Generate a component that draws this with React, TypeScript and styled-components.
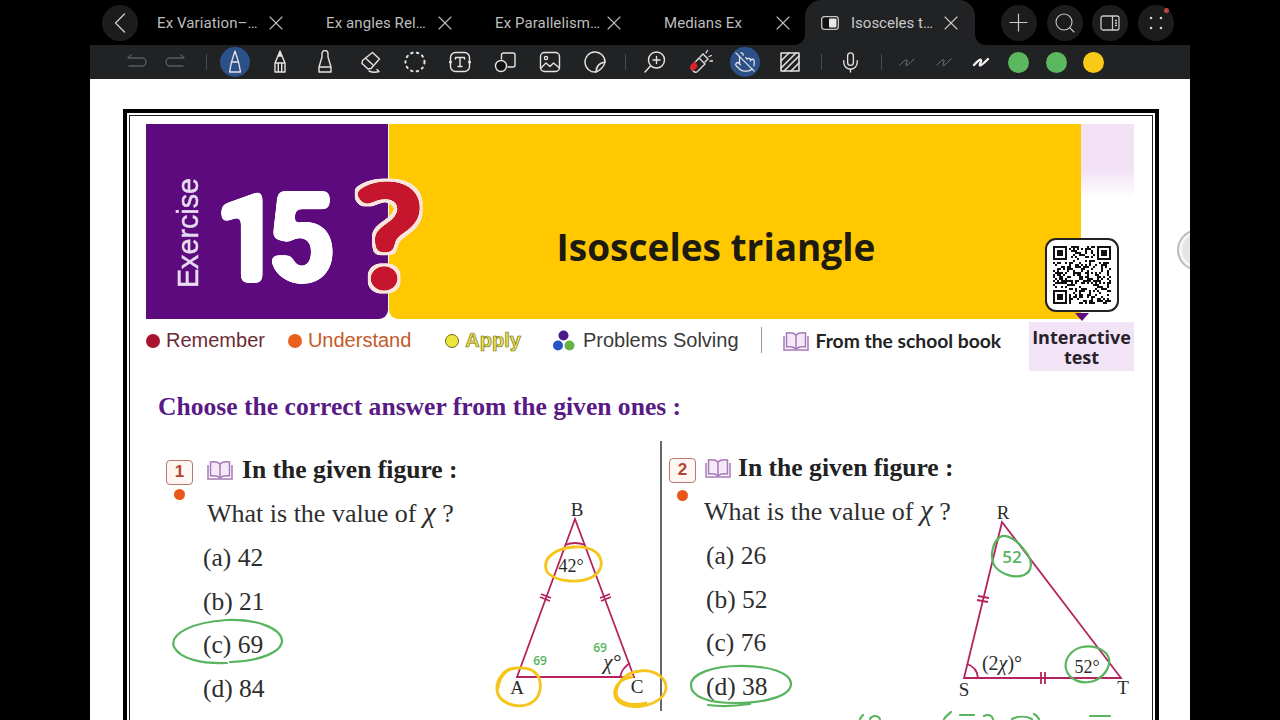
import React from 'react';
import styled, { createGlobalStyle } from 'styled-components';
import { ChevronLeft, X, Plus, Search, Mic, PointerOff } from 'lucide-react';

const GlobalStyle = createGlobalStyle`
    html, body {
        margin: 0;
        padding: 0;
        background: #000;
        overflow: hidden;
    }
`;

const SERIF = '"Liberation Serif", "Times New Roman", serif';
const SANS = '"Liberation Sans", Arial, sans-serif';
const HUMANIST = '"Open Sans", "Noto Sans", sans-serif';

const Screen = styled.div`
    width: 1280px;
    height: 720px;
    overflow: hidden;
    background: #000;
    display: flex;
    justify-content: center;
`;

const Shell = styled.div`
    width: 1100px;
    height: 720px;
    display: flex;
    flex-direction: column;
`;

/* top tab strip */
const TabBar = styled.div`
    height: 45px;
    flex: none;
    display: flex;
    align-items: center;
    padding-left: 12px;
    padding-right: 16px;
    font-family: Roboto, "Noto Sans", sans-serif;
`;

const RoundButton = styled.button`
    width: 36px;
    height: 36px;
    flex: none;
    border: none;
    padding: 0;
    border-radius: 50%;
    background: #1c1c1d;
    color: #c9c9c9;
    display: flex;
    align-items: center;
    justify-content: center;
    position: relative;
`;

const TabStrip = styled.div`
    display: flex;
    align-items: center;
    margin-left: 8px;
    height: 45px;
`;

const Tab = styled.div`
    width: 142px;
    margin-right: 27px;
    padding-left: 11px;
    box-sizing: border-box;
    display: flex;
    align-items: center;
    justify-content: space-between;
    color: #bdbdbd;
    font-size: 15px;
    letter-spacing: 0.1px;
    white-space: nowrap;
`;

const ActiveTab = styled.div`
    width: 170px;
    height: 45px;
    margin-left: -17px;
    box-sizing: border-box;
    padding: 0 12px 0 16px;
    display: flex;
    align-items: center;
    background: #212224;
    border-radius: 16px 16px 0 0;
    color: #c9c9c9;
    font-size: 15px;
    white-space: nowrap;
    position: relative;
    span {
        margin-left: 12px;
        flex: 1;
    }
    &::before,
    &::after {
        content: '';
        position: absolute;
        bottom: 0;
        width: 10px;
        height: 10px;
    }
    &::before {
        left: -10px;
        background: radial-gradient(circle at 0 0, #000 9.5px, #212224 10px);
    }
    &::after {
        right: -10px;
        background: radial-gradient(circle at 100% 0, #000 9.5px, #212224 10px);
    }
`;

const RightControls = styled.div`
    margin-left: auto;
    display: flex;
    gap: 9.7px;
`;

const Badge = styled.i`
    position: absolute;
    top: 3px;
    right: 5px;
    width: 5px;
    height: 5px;
    border-radius: 50%;
    background: #c0453f;
`;

/* tool strip */
const Toolbar = styled.div`
    height: 34px;
    flex: none;
    background: #212224;
    display: flex;
    align-items: center;
    padding-left: 32px;
`;

const ToolGroup = styled.div<{ $gap: number; $ml: number }>`
    display: flex;
    align-items: center;
    gap: ${(p) => p.$gap}px;
    margin-left: ${(p) => p.$ml}px;
`;

const Tool = styled.div<{ $size?: number; $active?: boolean }>`
    width: ${(p) => p.$size ?? 34}px;
    height: 30px;
    flex: none;
    display: flex;
    align-items: center;
    justify-content: center;
    border-radius: 15px;
    color: #e4e4e4;
    ${(p) => p.$active && 'background: #2c5088; width: 30px; margin: 0 2px;'}
`;

const ToolSeparator = styled.div<{ $ml: number }>`
    width: 1px;
    height: 16px;
    background: #4a4b4d;
    flex: none;
    margin-left: ${(p) => p.$ml}px;
`;

const ColorDot = styled.div<{ $color: string }>`
    width: 21px;
    height: 21px;
    flex: none;
    border-radius: 50%;
    background: ${(p) => p.$color};
`;

/* page */
const Sheet = styled.div`
    flex: 1;
    min-height: 0;
    background: #fff;
    padding: 30px 31px 0 33px;
    position: relative;
    overflow: hidden;
`;

const SideHandle = styled.div`
    position: absolute;
    left: 1087px;
    top: 150px;
    width: 42px;
    height: 42px;
    border-radius: 50%;
    background: #e4e4e4;
    border: 2px solid #bdbdbd;
    box-shadow: inset 0 0 0 3px #f6f6f6;
    box-sizing: border-box;
`;

const Frame = styled.div`
    border: 4px solid #000;
    padding: 2px;
    height: 700px;
    box-sizing: border-box;
`;

const FrameInner = styled.div`
    border: 1.5px solid #222;
    height: 100%;
    box-sizing: border-box;
    padding: 7.5px 18px 0 16px;
`;

const Banner = styled.div`
    height: 195px;
    display: flex;
    position: relative;
`;

const PurplePanel = styled.div`
    width: 242px;
    flex: none;
    background: #5e0a7f;
    border-radius: 0 0 9px 0;
    display: flex;
    align-items: center;
    box-sizing: border-box;
    padding-left: 29px;
`;

const ExerciseLabel = styled.div`
    writing-mode: vertical-rl;
    transform: rotate(180deg);
    font-family: ${SANS};
    font-size: 28.7px;
    line-height: 26px;
    color: #e6dcef;
    -webkit-text-stroke: 0.5px #e6dcef;
    margin-top: 24px;
`;

const BigNumber = styled.svg`
    flex: none;
    overflow: visible;
    margin-left: 17px;
    margin-top: 29px;
`;

const YellowPanel = styled.div`
    width: 692px;
    flex: none;
    margin-left: 1px;
    background: #ffc800;
    border-radius: 0 0 0 9px;
    display: flex;
    align-items: center;
    justify-content: center;
    padding-right: 38px;
    box-sizing: border-box;
`;

const QuestionMark = styled.svg`
    position: absolute;
    left: 200px;
    top: 45px;
    overflow: visible;
`;

const BannerTitle = styled.h1`
    margin: 52px 0 0;
    font-family: ${HUMANIST};
    font-weight: 700;
    font-size: 37px;
    line-height: 50px;
    color: #1d1a10;
    white-space: nowrap;
`;

const PinkStrip = styled.div`
    width: 53px;
    flex: none;
    background: linear-gradient(180deg, #f3e2f6 0, #f3e2f6 24%, #fff 38%);
`;

const QrCard = styled.div`
    position: absolute;
    left: 899px;
    top: 114px;
    width: 74px;
    height: 74px;
    box-sizing: border-box;
    background: #fff;
    border: 2px solid #222;
    border-radius: 11px;
    padding: 6px;
    &::after {
        content: '';
        position: absolute;
        left: 28px;
        bottom: -11px;
        border-left: 7px solid transparent;
        border-right: 7px solid transparent;
        border-top: 8px solid #5e0a7f;
    }
`;

const Legend = styled.div`
    display: flex;
    align-items: flex-start;
    height: 49px;
    margin-top: 3px;
`;

const LegendItem = styled.div<{ $ml?: number; $color: string; $bold?: boolean }>`
    display: flex;
    align-items: center;
    height: 38px;
    margin-left: ${(p) => p.$ml ?? 0}px;
    font-family: ${(p) => (p.$bold ? 'Lato, ' + HUMANIST : SANS)};
    font-weight: ${(p) => (p.$bold ? 700 : 400)};
    font-size: ${(p) => (p.$bold ? 19.3 : 20)}px;
    color: ${(p) => p.$color};
    white-space: nowrap;
`;

const LegendDot = styled.i<{ $color: string; $ring?: string }>`
    width: 14px;
    height: 14px;
    box-sizing: border-box;
    border-radius: 50%;
    background: ${(p) => p.$color};
    margin-right: 6px;
    flex: none;
    ${(p) => p.$ring && `border: 1.5px solid ${p.$ring};`}
`;

const ApplyText = styled.span`
    font-weight: 700;
    color: #e9e34e;
    -webkit-text-stroke: 0.7px #77701e;
`;

const LegendRule = styled.div`
    width: 1px;
    height: 26px;
    background: #999;
    margin: 5px 0 0 22px;
    flex: none;
`;

const InteractiveBox = styled.div`
    margin-left: auto;
    width: 105px;
    height: 49px;
    background: #f3e3f6;
    font-family: ${HUMANIST};
    font-weight: 700;
    font-size: 18px;
    line-height: 20px;
    color: #26222a;
    text-align: center;
    padding-top: 5px;
    box-sizing: border-box;
`;

const Instruction = styled.h2`
    margin: 21px 0 0 12px;
    font-family: ${SERIF};
    font-weight: 700;
    font-size: 25.6px;
    line-height: 30px;
    color: #591a86;
    white-space: nowrap;
`;

const Questions = styled.div`
    display: grid;
    grid-template-columns: 516px minmax(0, 1fr);
    height: 270px;
    margin-top: 19px;
`;

const Question = styled.div<{ $divided?: boolean; $pl: number; $pt: number }>`
    display: flex;
    min-width: 0;
    box-sizing: border-box;
    height: 270px;
    padding: ${(p) => p.$pt}px 0 0 ${(p) => p.$pl}px;
    ${(p) => p.$divided && 'border-right: 2px solid #666;'}
`;

const NumberColumn = styled.div`
    width: 27px;
    flex: none;
    margin-top: 5px;
    display: flex;
    flex-direction: column;
    align-items: center;
`;

const NumberBox = styled.div`
    width: 27px;
    height: 25px;
    box-sizing: border-box;
    border: 1.5px solid #b9796f;
    border-radius: 4px;
    background: #fdf6f3;
    font-family: ${SANS};
    font-weight: 700;
    font-size: 17px;
    line-height: 22px;
    text-align: center;
    color: #b5432f;
`;

const OrangeDot = styled.i<{ $mt: number }>`
    width: 11px;
    height: 11px;
    border-radius: 50%;
    background: #e8561a;
    margin-top: ${(p) => p.$mt}px;
`;

const QuestionBody = styled.div<{ $ml: number }>`
    flex: 1;
    min-width: 0;
    margin-left: ${(p) => p.$ml}px;
`;

const QuestionTitle = styled.div<{ $gap: number }>`
    display: flex;
    align-items: center;
    height: 30px;
    margin-bottom: 6px;
    font-family: ${SERIF};
    font-weight: 700;
    font-size: 25.6px;
    color: #222;
    white-space: nowrap;
    svg {
        margin-right: ${(p) => p.$gap}px;
    }
`;

const Line = styled.div<{ $ml?: number }>`
    position: relative;
    height: 43.6px;
    line-height: 43.6px;
    margin-left: ${(p) => p.$ml ?? 0}px;
    font-family: ${SERIF};
    font-size: 25.5px;
    color: #2e2e2e;
    white-space: nowrap;
`;

const PromptLine = styled(Line)`
    font-size: 26px;
    margin-bottom: 2px;
    i {
        font-size: 29px;
    }
`;

const Scribble = styled.svg<{ $left: number; $top: number }>`
    position: absolute;
    left: ${(p) => p.$left}px;
    top: ${(p) => p.$top}px;
    overflow: visible;
`;

const Figure = styled.svg<{ $mt: number; $mr: number }>`
    flex: none;
    overflow: visible;
    margin-top: ${(p) => p.$mt}px;
    margin-right: ${(p) => p.$mr}px;
`;

const QR_SIZE = 29;

const QrCode: React.FC = () => {
    const cells: React.ReactNode[] = [];
    let seed = 29;
    for (let y = 0; y < QR_SIZE; y++) {
        for (let x = 0; x < QR_SIZE; x++) {
            seed = (seed * 137 + 59) % 1009;
            const quiet =
                (x < 8 && y < 8) || (x >= QR_SIZE - 8 && y < 8) || (x < 8 && y >= QR_SIZE - 8);
            if (!quiet && seed % 5 < 2) {
                cells.push(<rect key={`${x}-${y}`} x={x} y={y} width={1} height={1} />);
            }
        }
    }
    const finder = (ox: number, oy: number) => (
        <g key={`${ox}-${oy}`}>
            <rect x={ox + 0.5} y={oy + 0.5} width={6} height={6} fill="none" stroke="#111" />
            <rect x={ox + 2} y={oy + 2} width={3} height={3} />
        </g>
    );
    return (
        <svg width="58" height="58" viewBox={`0 0 ${QR_SIZE} ${QR_SIZE}`} fill="#111" shapeRendering="crispEdges">
            {finder(0, 0)}
            {finder(QR_SIZE - 7, 0)}
            {finder(0, QR_SIZE - 7)}
            {cells}
        </svg>
    );
};

const BookIcon: React.FC<{ w?: number }> = ({ w = 26 }) => (
    <svg width={w} height={(w * 20) / 26} viewBox="0 0 26 20" fill="none" stroke="#a678b8" strokeWidth="1.5" style={{ flex: 'none' }}>
        <path d="M13 4C11 2 7 1.5 3.5 2v14c3.500-.5 7.500 0 9.500 2 2-2 6-2.500 9.500-2V2C19 1.500 15 2 13 4z" fill="#f4e9f7" />
        <path d="M13 4v14M1 5v14h24V5" />
    </svg>
);

const ProblemsIcon: React.FC = () => (
    <svg width="24" height="24" viewBox="0 0 24 24" style={{ marginRight: 7 }}>
        <circle cx="11.500" cy="6.500" r="5" fill="#4b1b87" />
        <circle cx="6" cy="16.500" r="5" fill="#2554c7" />
        <circle cx="17.500" cy="16.500" r="5" fill="#66b245" />
    </svg>
);

const stroke = { fill: 'none', stroke: 'currentColor', strokeWidth: 1.4, strokeLinecap: 'round', strokeLinejoin: 'round' } as const;

const UndoIcon = () => (
    <svg width="20" height="16" viewBox="0 0 20 16" {...stroke} stroke="#5a5b5d">
        <path d="M1 4h14a4 4 0 0 1 0 8H2M1 4l3-3" />
    </svg>
);
const RedoIcon = () => (
    <svg width="20" height="16" viewBox="0 0 20 16" {...stroke} stroke="#5a5b5d">
        <path d="M19 4H5a4 4 0 0 0 0 8h13M19 4l-3-3" />
    </svg>
);
const PenIcon = () => (
    <svg width="16" height="24" viewBox="0 0 16 24" {...stroke} strokeWidth="1.300">
        <path d="M8 1L4.500 12h7zM4.500 12L2.500 22h11l-2-10" />
    </svg>
);
const PencilIcon = () => (
    <svg width="16" height="24" viewBox="0 0 16 24" {...stroke}>
        <path d="M8 1l-2 5h4z" fill="currentColor" />
        <path d="M6 6L3 13v9h10v-9l-3-7M3 13h10M6.300 14v8M9.700 14v8" />
    </svg>
);
const MarkerIcon = () => (
    <svg width="18" height="24" viewBox="0 0 18 24" {...stroke}>
        <path d="M6 7V3.500a3 3 0 0 1 6 0V7l3 10v5H3v-5zM3 17h12" />
    </svg>
);
const EraserIcon = () => (
    <svg width="24" height="24" viewBox="0 0 24 24" {...stroke}>
        <path d="M14.500 2.500l7 6.500-8.500 9.500-3 .5-6-5.500 .5-3zM7.500 8l7 6.500" />
        <path d="M11 21c3 1.500 7 1.500 10 .5l-2-2" />
    </svg>
);
const LassoIcon = () => (
    <svg width="24" height="24" viewBox="0 0 24 24" {...stroke} strokeWidth="2" strokeDasharray="1.500 4.300">
        <circle cx="12" cy="12" r="9.500" />
    </svg>
);
const TextIcon = () => (
    <svg width="24" height="24" viewBox="0 0 24 24" {...stroke}>
        <rect x="2.500" y="2.500" width="19" height="19" rx="5" />
        <path d="M7.500 9V7.500h9V9M12 7.500v9M10 16.500h4" />
        <circle cx="2.500" cy="12" r=".8" fill="currentColor" />
        <circle cx="21.500" cy="12" r=".8" fill="currentColor" />
    </svg>
);
const ShapesIcon = () => (
    <svg width="24" height="24" viewBox="0 0 24 24" {...stroke}>
        <path d="M8.500 9V5a2 2 0 0 1 2-2H20a2 2 0 0 1 2 2v10a2 2 0 0 1-2 2h-5" />
        <circle cx="8" cy="16" r="5.500" fill="#111" />
    </svg>
);
const ImageIcon = () => (
    <svg width="24" height="24" viewBox="0 0 24 24" {...stroke}>
        <rect x="2.500" y="2.500" width="19" height="19" rx="4" />
        <circle cx="8" cy="8" r="1.600" />
        <path d="M3 18l5-5 4 3.500 3.500-3.500 6 5" />
    </svg>
);
const StickerIcon = () => (
    <svg width="24" height="24" viewBox="0 0 24 24" {...stroke}>
        <path d="M13 22A10 10 0 1 1 22 12c-.5 4-5 8.500-9 10z" />
        <path d="M13 22c-.5-5 3-9 9-10-2 .5-5 1-6.500 3S13.500 19 13 22z" />
    </svg>
);
const ZoomIcon = () => (
    <svg width="24" height="24" viewBox="0 0 24 24" {...stroke}>
        <circle cx="13.500" cy="10" r="8" />
        <path d="M13.500 6.500v7M10 10h7M7.500 16L2 22" />
    </svg>
);
const LaserIcon = () => (
    <svg width="26" height="26" viewBox="0 0 26 26" fill="none" stroke="#e4e4e4" strokeWidth="1.300" strokeLinecap="round">
        <path d="M12 9l6 6-7.500 7.500a3 3 0 0 1-4-.3l-1.500-1.700a3 3 0 0 1 0-4z" />
        <path d="M10 17.500l-3.800 3.800a3 3 0 0 1-1.800-1.300 3 3 0 0 1 .2-3.700L8 13z" fill="#e0202c" stroke="#e0202c" />
        <path d="M13 8l3-3 5 5-3 3M19 4l1.500-2.500M22 7.500l2.500-1M23 12h2.500" />
    </svg>
);
const HatchIcon = () => (
    <svg width="22" height="22" viewBox="0 0 22 22" {...stroke} strokeWidth="1.500">
        <rect x="2" y="2" width="18" height="18" />
        <path d="M2 10l8-8M2 17L17 2M5 20L20 5M12 20l8-8" />
    </svg>
);
const Squiggle: React.FC<{ color: string; w: number }> = ({ color, w }) => (
    <svg width="20" height="12" viewBox="0 0 20 12" fill="none" stroke={color} strokeWidth={w} strokeLinecap="round" strokeLinejoin="round">
        <path d="M3 9C6 6 9 3 10 4S8 9 9 9.500 14 6 17 3" />
    </svg>
);
const SplitIcon = () => (
    <svg width="18" height="14" viewBox="0 0 18 14">
        <rect x=".7" y=".7" width="16.600" height="12.600" rx="2.500" fill="#111" stroke="#c9c9c9" strokeWidth="1.300" />
        <rect x="8" y="2.500" width="7.500" height="9" rx="1" fill="#e8e8e8" />
    </svg>
);
const PanelIcon = () => (
    <svg width="20" height="18" viewBox="0 0 20 18" fill="none" stroke="#c9c9c9" strokeWidth="1.300">
        <rect x="1" y="2" width="18" height="14" rx="2" />
        <path d="M12.500 2v14M15 6.500h2M15 9h2M15 11.500h2" />
    </svg>
);
const DotsIcon = () => (
    <svg width="16" height="16" viewBox="0 0 16 16" fill="#d0d0d0">
        <circle cx="3" cy="3" r="1.300" />
        <circle cx="13" cy="3" r="1.300" />
        <circle cx="3" cy="13" r="1.300" />
        <circle cx="13" cy="13" r="1.300" />
    </svg>
);

const GREEN = '#58b45d';
const YELLOW = '#f6c51b';
const MAGENTA = '#b4235f';

const figureLabel = { fontFamily: SERIF, fontSize: 19, fill: '#2b2b2b', textAnchor: 'middle' } as const;
const noteLabel = { fontFamily: '"Open Sans", sans-serif', fontWeight: 600, fill: GREEN, textAnchor: 'middle' } as const;

const FigureOne: React.FC = () => (
    <Figure $mt={40} $mr={-10} width="180" height="225" viewBox="490 495 180 225">
        <g fill="none" stroke={MAGENTA} strokeWidth="1.800">
            <path d="M575 519L517 677H634Z" />
            <path d="M565 545Q575 541 585 545" />
            <path d="M620 677Q622 668 630 663" />
            <path d="M540 597l10 4M541 594l10 4M601 601l10-4M600 598l10-4" />
        </g>
        <text {...figureLabel} x="577" y="516">B</text>
        <text {...figureLabel} x="517" y="694">A</text>
        <text {...figureLabel} x="637" y="693">C</text>
        <text {...figureLabel} x="571" y="572" fontSize="18">42°</text>
        <text {...figureLabel} x="612" y="669" fontStyle="italic" fontSize="21">χ°</text>
        <text {...noteLabel} x="540" y="665" fontSize="12">69</text>
        <text {...noteLabel} x="600" y="652" fontSize="12">69</text>
        <g fill="none" stroke={YELLOW} strokeWidth="2.800" strokeLinecap="round">
            <path d="M547 572C541 558 556 548 574 547C592 546 603 554 601 566C599 577 584 582 570 581C558 580 551 577 547 572Z" />
            <path d="M516 668C504 668 496 680 497 690C498 702 514 708 526 705C538 702 543 690 539 678C536 671 528 667 516 668C506 668 499 678 498 688" />
            <path d="M632 677C620 678 613 688 615 696C617 704 628 708 642 706C656 704 667 696 666 686C665 676 652 669 640 671C628 672 618 680 616 692C616 702 630 707 646 703" />
        </g>
    </Figure>
);

const FigureTwo: React.FC = () => (
    <Figure $mt={42} $mr={-6} width="200" height="225" viewBox="940 495 200 225">
        <g fill="none" stroke={MAGENTA} strokeWidth="1.800">
            <path d="M1002 522L964 678H1121Z" />
            <path d="M967 664Q977 667 978 678" />
            <path d="M978 596l11 2M977 600l11 2M1041 672v12M1045 672v12" />
        </g>
        <text {...figureLabel} x="1003" y="519">R</text>
        <text {...figureLabel} x="964" y="696">S</text>
        <text {...figureLabel} x="1123" y="694">T</text>
        <text {...figureLabel} x="1002" y="670" fontSize="20">
            (2<tspan fontStyle="italic">χ</tspan>)°
        </text>
        <text {...figureLabel} x="1087" y="673" fontSize="18">52°</text>
        <text {...noteLabel} x="1012" y="563" fontSize="17">52</text>
        <g fill="none" stroke={GREEN} strokeWidth="2.200" strokeLinecap="round">
            <path d="M1000 537C992 543 990 556 994 565C1000 574 1014 579 1024 575C1033 571 1033 560 1025 551C1018 541 1007 533 1000 537Z" />
            <path d="M1082 647C1070 650 1064 660 1066 669C1069 680 1082 685 1094 681C1106 676 1112 664 1108 656C1103 648 1092 645 1082 647Z" />
            <path d="M860 719c1-2 2-3 3-4M870 719c2-4 8-4 10 0M944 719C946 716 949 714 951 712M960 715h14M984 716c4-2 8-1 9 3M1012 719c6-3 14-3 20 0M1034 714c2 1 4 3 5 5M1090 716h20" />
        </g>
    </Figure>
);

const App: React.FC = () => {
    return (
        <Screen>
            <GlobalStyle />
            <Shell>
                <TabBar>
                    <RoundButton>
                        <ChevronLeft size={38} strokeWidth={0.9} />
                    </RoundButton>
                    <TabStrip>
                        {['Ex Variation–…', 'Ex angles Rel…', 'Ex Parallelism…', 'Medians Ex'].map((name) => (
                            <Tab key={name}>
                                {name}
                                <X size={24} strokeWidth={1.100} />
                            </Tab>
                        ))}
                        <ActiveTab>
                            <SplitIcon />
                            <span>Isosceles t…</span>
                            <X size={24} strokeWidth={1.100} />
                        </ActiveTab>
                    </TabStrip>
                    <RightControls>
                        <RoundButton>
                            <Plus size={29} strokeWidth={1} />
                        </RoundButton>
                        <RoundButton>
                            <Search size={24} strokeWidth={1.100} />
                        </RoundButton>
                        <RoundButton>
                            <PanelIcon />
                        </RoundButton>
                        <RoundButton>
                            <DotsIcon />
                            <Badge />
                        </RoundButton>
                    </RightControls>
                </TabBar>
                <Toolbar>
                    <ToolGroup $gap={8} $ml={0}>
                        <Tool $size={30}><UndoIcon /></Tool>
                        <Tool $size={30}><RedoIcon /></Tool>
                    </ToolGroup>
                    <ToolSeparator $ml={16} />
                    <ToolGroup $gap={11} $ml={11}>
                        <Tool $active><PenIcon /></Tool>
                        <Tool><PencilIcon /></Tool>
                        <Tool><MarkerIcon /></Tool>
                        <Tool><EraserIcon /></Tool>
                        <Tool><LassoIcon /></Tool>
                        <Tool><TextIcon /></Tool>
                        <Tool><ShapesIcon /></Tool>
                        <Tool><ImageIcon /></Tool>
                        <Tool><StickerIcon /></Tool>
                    </ToolGroup>
                    <ToolSeparator $ml={13} />
                    <ToolGroup $gap={11} $ml={12}>
                        <Tool><ZoomIcon /></Tool>
                        <Tool><LaserIcon /></Tool>
                        <Tool $active><PointerOff size={22} strokeWidth={1.400} /></Tool>
                        <Tool><HatchIcon /></Tool>
                    </ToolGroup>
                    <ToolSeparator $ml={14} />
                    <ToolGroup $gap={0} $ml={11}>
                        <Tool><Mic size={23} strokeWidth={1.400} /></Tool>
                    </ToolGroup>
                    <ToolSeparator $ml={14} />
                    <ToolGroup $gap={13} $ml={13}>
                        <Tool $size={24}><Squiggle color="#77787a" w={1} /></Tool>
                        <Tool $size={24}><Squiggle color="#77787a" w={1} /></Tool>
                        <Tool $size={24}><Squiggle color="#f2f2f2" w={2.400} /></Tool>
                    </ToolGroup>
                    <ToolGroup $gap={16.500} $ml={15}>
                        <ColorDot $color="#5cb85f" />
                        <ColorDot $color="#5cb85f" />
                        <ColorDot $color="#f8c916" />
                    </ToolGroup>
                </Toolbar>
                <Sheet>
                    <Frame>
                        <FrameInner>
                            <Banner>
                                <PurplePanel>
                                    <ExerciseLabel>Exercise</ExerciseLabel>
                                    <BigNumber width="114" height="92" viewBox="0 0 114 92">
                                        <defs>
                                            <filter id="soften" x="-20%" y="-20%" width="140%" height="140%">
                                                <feGaussianBlur in="SourceAlpha" stdDeviation="3.500" />
                                                <feComponentTransfer result="shape">
                                                    <feFuncA type="linear" slope="14" intercept="-5" />
                                                </feComponentTransfer>
                                                <feFlood floodColor="#fff" />
                                                <feComposite in2="shape" operator="in" />
                                            </filter>
                                            <filter id="sticker" x="-30%" y="-30%" width="160%" height="160%">
                                                <feGaussianBlur in="SourceAlpha" stdDeviation="3.500" />
                                                <feComponentTransfer result="shape">
                                                    <feFuncA type="linear" slope="14" intercept="-5" />
                                                </feComponentTransfer>
                                                <feMorphology in="shape" operator="dilate" radius="3" result="wide" />
                                                <feFlood floodColor="#f8e6dc" />
                                                <feComposite in2="wide" operator="in" result="outline" />
                                                <feFlood floodColor="#c5122f" />
                                                <feComposite in2="shape" operator="in" result="body" />
                                                <feMerge>
                                                    <feMergeNode in="outline" />
                                                    <feMergeNode in="body" />
                                                </feMerge>
                                            </filter>
                                        </defs>
                                        <text
                                            x="-6"
                                            y="92"
                                            fontFamily="Roboto, sans-serif"
                                            fontWeight="900"
                                            fontSize="126"
                                            letterSpacing="-16"
                                            fill="#fff"
                                            transform="scale(0.96 1)"
                                            filter="url(#soften)"
                                        >
                                            15
                                        </text>
                                    </BigNumber>
                                </PurplePanel>
                                <YellowPanel>
                                    <BannerTitle>Isosceles triangle</BannerTitle>
                                </YellowPanel>
                                <PinkStrip />
                                <QuestionMark width="85" height="125" viewBox="0 0 85 125">
                                    <text
                                        x="0"
                                        y="0"
                                        textAnchor="middle"
                                        fontFamily="Lato, sans-serif"
                                        fontWeight="900"
                                        fontSize="158"
                                        fill="#c5122f"
                                        transform="translate(42 120) scale(1 0.92)"
                                        filter="url(#sticker)"
                                    >
                                        ?
                                    </text>
                                </QuestionMark>
                                <QrCard>
                                    <QrCode />
                                </QrCard>
                            </Banner>
                            <Legend>
                                <LegendItem $color="#6d2b36">
                                    <LegendDot $color="#a8142e" />
                                    Remember
                                </LegendItem>
                                <LegendItem $ml={23} $color="#c4592a">
                                    <LegendDot $color="#e8601c" />
                                    Understand
                                </LegendItem>
                                <LegendItem $ml={34} $color="#e9e34e">
                                    <LegendDot $color="#ece63c" $ring="#6e6a1a" />
                                    <ApplyText>Apply</ApplyText>
                                </LegendItem>
                                <LegendItem $ml={31} $color="#3a3a3a">
                                    <ProblemsIcon />
                                    Problems Solving
                                </LegendItem>
                                <LegendRule />
                                <LegendItem $ml={21} $color="#232323" $bold>
                                    <BookIcon />
                                    <span style={{ marginLeft: 7 }}>From the school book</span>
                                </LegendItem>
                                <InteractiveBox>
                                    Interactive
                                    <br />
                                    test
                                </InteractiveBox>
                            </Legend>
                            <Instruction>Choose the correct answer from the given ones :</Instruction>
                            <Questions>
                                <Question $divided $pl={20} $pt={14}>
                                    <NumberColumn>
                                        <NumberBox>1</NumberBox>
                                        <OrangeDot $mt={4} />
                                    </NumberColumn>
                                    <QuestionBody $ml={14}>
                                        <QuestionTitle $gap={9}>
                                            <BookIcon />
                                            In the given figure :
                                        </QuestionTitle>
                                        <PromptLine>What is the value of <i>χ</i> ?</PromptLine>
                                        <Line $ml={-4}>(a) 42</Line>
                                        <Line $ml={-4}>(b) 21</Line>
                                        <Line $ml={-4}>
                                            (c) 69
                                            <Scribble $left={-31} $top={-4} width="111" height="45" viewBox="0 0 111 45" fill="none" stroke={GREEN} strokeWidth="2.200" strokeLinecap="round">
                                                <path d="M55 44C30 45 8 40 2 28C-3 15 20 3 55 1C85 0 108 9 110 21C111 33 88 42 58 43" />
                                            </Scribble>
                                        </Line>
                                        <Line $ml={-4}>(d) 84</Line>
                                    </QuestionBody>
                                    <FigureOne />
                                </Question>
                                <Question $pl={7} $pt={12}>
                                    <NumberColumn>
                                        <NumberBox>2</NumberBox>
                                        <OrangeDot $mt={7} />
                                    </NumberColumn>
                                    <QuestionBody $ml={9}>
                                        <QuestionTitle $gap={7}>
                                            <BookIcon />
                                            In the given figure :
                                        </QuestionTitle>
                                        <PromptLine $ml={-1}>What is the value of <i>χ</i> ?</PromptLine>
                                        <Line $ml={1}>(a) 26</Line>
                                        <Line $ml={1}>(b) 52</Line>
                                        <Line $ml={1}>(c) 76</Line>
                                        <Line $ml={1}>
                                            (d) 38
                                            <Scribble $left={-16} $top={0} width="102" height="41" viewBox="0 0 102 41" fill="none" stroke={GREEN} strokeWidth="2.200" strokeLinecap="round">
                                                <path d="M50 1C22 1 1 9 1 20C1 32 18 38 46 38C78 38 101 30 101 19C101 8 80 0 45 1M18 40C32 42 46 41 60 39" />
                                            </Scribble>
                                        </Line>
                                    </QuestionBody>
                                    <FigureTwo />
                                </Question>
                            </Questions>
                        </FrameInner>
                    </Frame>
                    <SideHandle />
                </Sheet>
            </Shell>
        </Screen>
    );
};

export default App;
